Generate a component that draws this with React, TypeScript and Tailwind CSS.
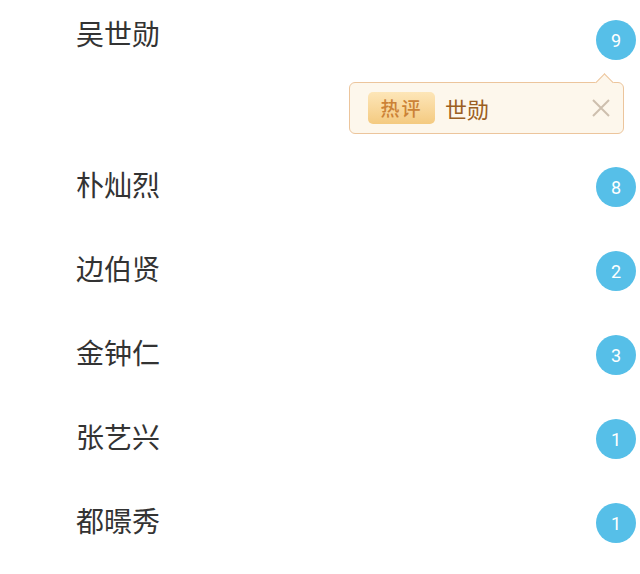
import React from "react";

const cjk = { fontFamily: '"Noto Sans CJK SC", "Noto Sans", sans-serif' };

const rows = [
  { name: "朴灿烈", count: 8 },
  { name: "边伯贤", count: 2 },
  { name: "金钟仁", count: 3 },
  { name: "张艺兴", count: 1 },
  { name: "都暻秀", count: 1 },
];

const Badge = ({ n }: { n: number }) => (
  <div
    className="flex h-[40px] w-[40px] items-center justify-center rounded-full bg-[#56bfe8] text-[18px] text-white"
    style={{ fontFamily: "Roboto, sans-serif" }}
  >
    {n}
  </div>
);

const Row = ({ name, count, h, lift }: { name: string; count: number; h: string; lift: string }) => (
  <div className={`flex items-center justify-between pl-[76px] pr-[4px] ${h}`}>
    <span className={`text-[28px] leading-none text-[#333] ${lift}`}>{name}</span>
    <Badge n={count} />
  </div>
);

export default function App() {
  return (
    <div className="h-[574px] w-[640px] overflow-hidden bg-white" style={cjk}>
      <Row name="吴世勋" count={9} h="h-[80px]" lift="mb-[14px]" />

      <div className="ml-[349px] mr-[16px] mt-[2px] mb-[11px]">
        <div className="relative flex h-[52px] items-center rounded-[6px] border border-[#ecc59c] bg-[#fdf7ec] pl-[18px] pr-[12px]">
          <div className="absolute right-[12px] top-[-7px] h-[13px] w-[13px] rotate-45 border-l border-t border-[#ecc59c] bg-[#fdf7ec]" />
          <span className="flex h-[32px] w-[67px] items-center justify-center rounded-[5px] bg-gradient-to-b from-[#fde6b8] to-[#f4ca80] text-[19px] font-medium tracking-[2px] text-[#cc8236]">
            热评
          </span>
          <span className="ml-[10px] text-[22px] text-[#9b5e22]">世勋</span>
          <svg className="ml-auto" width="20" height="20" viewBox="0 0 20 20">
            <path d="M2 2 L18 18 M18 2 L2 18" stroke="#cdbfae" strokeWidth="2" fill="none" />
          </svg>
        </div>
      </div>

      {rows.map((r) => (
        <Row key={r.name} name={r.name} count={r.count} h="h-[84px]" lift="mb-[6px]" />
      ))}
    </div>
  );
}
